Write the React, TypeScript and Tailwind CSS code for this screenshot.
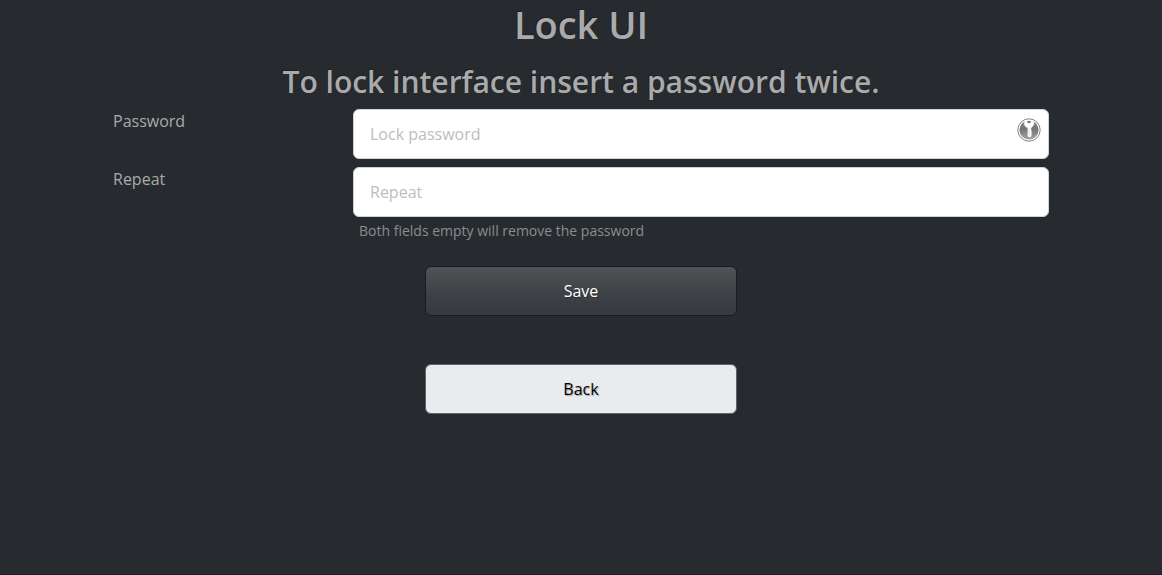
import React from "react";

type FieldProps = {
  id: string;
  label: string;
  placeholder: string;
  children?: React.ReactNode;
};

function KeyIcon() {
  return (
    <svg viewBox="0 0 24 24" className="size-6" aria-hidden="true">
      <defs>
        <linearGradient id="key-disc" x1="0" y1="0" x2="0" y2="1">
          <stop offset="0" stopColor="#8a8a8a" />
          <stop offset="0.45" stopColor="#747474" />
          <stop offset="1" stopColor="#a6a6a6" />
        </linearGradient>
      </defs>
      <circle cx="12" cy="12" r="11.2" fill="#fff" stroke="#777" strokeWidth="0.9" />
      <circle cx="12" cy="12" r="9.6" fill="url(#key-disc)" />
      <path
        d="M8.2 2.4 Q12 1.4 15.8 2.4 L17 5.6 Q17 7.6 15.4 8.8 L14.2 10 V12.4 L15 13.2 L14.2 14.2 L15 15.4 L14.2 16.6 L14.6 18 L12.6 19.6 L10.6 18.2 V10 L8.6 8.8 Q7 7.6 7 5.6 Z"
        fill="#fff"
      />
      <path d="M10 3.1 H14 L13.4 4.6 L12 5.4 L10.6 4.6 Z" fill="#777" />
      <path d="M12.2 10 V18" stroke="#d2d2d2" strokeWidth="0.7" />
    </svg>
  );
}

function Field({ id, label, placeholder, children }: FieldProps) {
  return (
    <div className="grid grid-cols-4">
      <label htmlFor={id} className="px-3 leading-6">
        {label}
      </label>
      <div className="relative col-span-3 px-3">
        <input
          id={id}
          type="password"
          placeholder={placeholder}
          className="block h-[50px] w-full rounded-md border border-[#ced4da] bg-white px-4 text-[#272b30] placeholder:text-[#bdbdbd]"
        />
        {children}
      </div>
    </div>
  );
}

export default function App() {
  return (
    <main className="min-h-screen border-b border-[#211e25] bg-[#272b30] font-['Open_Sans','Noto_Sans',sans-serif] text-base text-[#aaaaaa]">
      <div className="mx-auto max-w-[960px]">
        <h1 className="text-center text-[38px] leading-12 font-semibold [text-shadow:-1px_-1px_0_rgba(0,0,0,0.3)]">
          Lock UI
        </h1>
        <h2 className="mt-4 mb-[9px] text-center text-[30px] leading-9 font-semibold [text-shadow:-1px_-1px_0_rgba(0,0,0,0.3)]">
          To lock interface insert a password twice.
        </h2>
        <form onSubmit={(event) => event.preventDefault()}>
          <div className="flex flex-col gap-2">
            <Field id="password" label="Password" placeholder="Lock password">
              <span className="pointer-events-none absolute top-[9px] right-5">
                <KeyIcon />
              </span>
            </Field>
            <Field id="repeat" label="Repeat" placeholder="Repeat" />
          </div>
          <div className="grid grid-cols-4">
            <p className="col-span-3 col-start-2 mt-1 px-[18px] text-sm leading-5 text-[#8c8c8c]">
              Both fields empty will remove the password
            </p>
          </div>
          <div className="mx-auto mt-[25px] flex w-1/3 flex-col gap-12 px-1">
            <button
              type="submit"
              className="h-[50px] rounded-md border border-[#191b1e] bg-linear-to-b from-[#505356] via-[#3d4145] via-60% to-[#36393d] text-white [text-shadow:1px_1px_1px_rgba(0,0,0,0.3)]"
            >
              Save
            </button>
            <button
              type="button"
              className="h-[50px] rounded-md border border-[#606366] bg-[#e9ecef] text-black [text-shadow:1px_1px_1px_rgba(0,0,0,0.3)]"
            >
              Back
            </button>
          </div>
        </form>
      </div>
    </main>
  );
}
